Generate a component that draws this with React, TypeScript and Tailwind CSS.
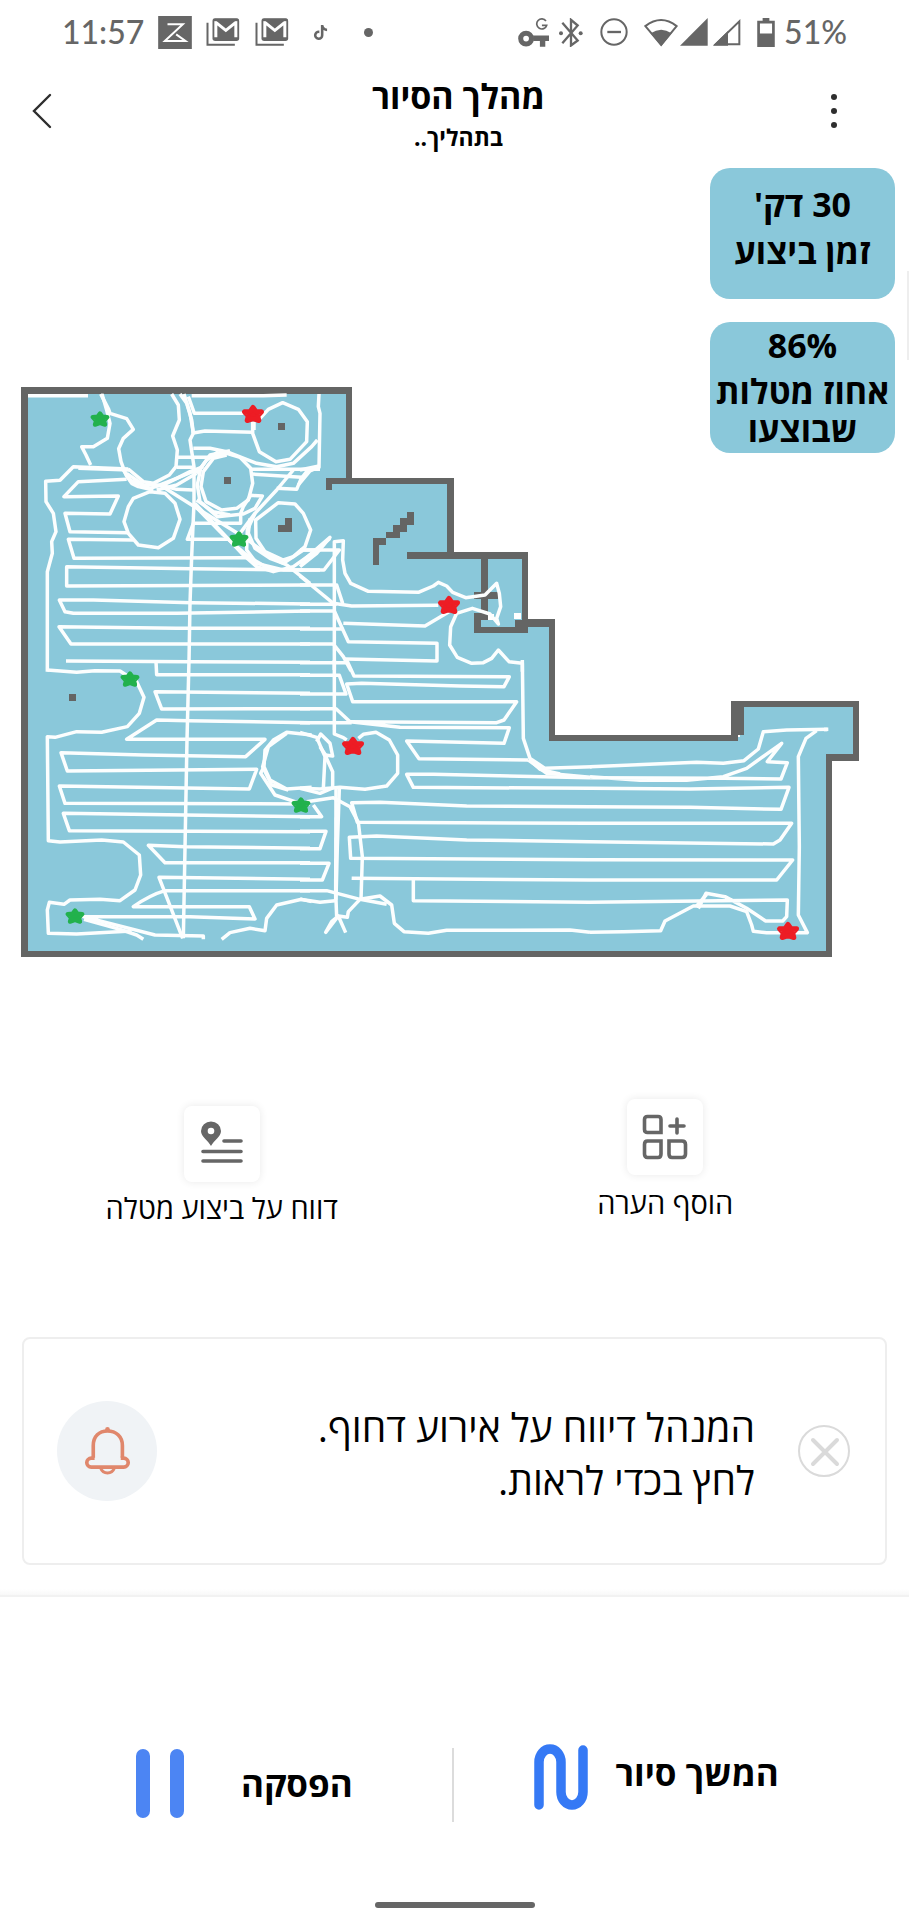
import type { ReactNode } from "react";
import { FaTiktok } from "react-icons/fa6";

function Glyph({ box, className, children }: { box: string; className: string; children: ReactNode }) {
  return (
    <svg viewBox={box} className={className} fill="none" stroke="currentColor" aria-hidden="true">
      {children}
    </svg>
  );
}

function MailGlyph() {
  return (
    <Glyph box="0 0 101 84" className="h-7 w-[34px]">
      <path d="M4 14V80H86" strokeWidth="6" />
      <rect x="19" y="1" width="80" height="68" rx="8" fill="currentColor" stroke="none" />
      <path d="M29 58V13L59 37 89 13V58" stroke="#fff" strokeWidth="9" />
      <path d="M22 6H96" strokeWidth="7" />
    </Glyph>
  );
}

function StatusBar() {
  return (
    <div className="flex h-16 items-center justify-between pr-[62px] pl-[62px] text-[#666]">
      <div className="flex items-center">
        <span className="font-[Lato,sans-serif] text-[32px] leading-10 font-medium">11:57</span>
        <Glyph box="0 0 101 99" className="ml-[14px] h-[33px] w-[34px]">
          <rect width="101" height="99" fill="currentColor" stroke="none" />
          <path d="M28 25H74L20 75H82L54 55" stroke="#fff" strokeWidth="6" />
        </Glyph>
        <div className="ml-[14px] flex gap-[15px]">
          <MailGlyph />
          <MailGlyph />
        </div>
        <FaTiktok className="ml-6 size-[15px]" aria-hidden="true" />
        <span className="ml-9 size-[9px] rounded-full bg-[#666]" />
      </div>
      <div className="flex items-center">
        <Glyph box="200 52 92 86" className="h-[29px] w-[31px]">
          <circle cx="224" cy="113" r="16" strokeWidth="15" />
          <path d="M245 112H292M273 112V137" strokeWidth="16" />
          <path d="M283 61A15 15 0 1 0 285 74H271" strokeWidth="5" />
        </Glyph>
        <Glyph box="324 52 72 86" className="ml-[10px] h-[29px] w-6">
          <path d="M334 66L380 119 360 134V57L380 74 334 127" strokeWidth="7" />
          <circle cx="330" cy="97" r="6" fill="currentColor" stroke="none" />
          <circle cx="389" cy="97" r="6" fill="currentColor" stroke="none" />
        </Glyph>
        <Glyph box="446 55 84 84" className="ml-[17px] size-7">
          <circle cx="488" cy="97" r="38" strokeWidth="6" />
          <path d="M468 97H509" strokeWidth="7" />
        </Glyph>
        <Glyph box="577 52 101 86" className="ml-4 h-[29px] w-[34px]">
          <path d="M581 76Q628 40 674 76L628 132Z" strokeWidth="6" />
          <path d="M597 97Q628 76 659 97L628 135Z" fill="currentColor" stroke="none" />
        </Glyph>
        <Glyph box="687 54 84 84" className="ml-[2px] size-7">
          <path d="M687 137L770 54V137Z" fill="currentColor" stroke="none" />
        </Glyph>
        <Glyph box="787 54 84 84" className="ml-[5px] size-7">
          <path d="M795 133L866 64V133Z" strokeWidth="6" />
          <path d="M787 137L832 93V137Z" fill="currentColor" stroke="none" />
        </Glyph>
        <Glyph box="918 54 52 86" className="ml-4 h-[29px] w-[18px]">
          <path d="M934 54H954V62H970V140H918V62H934ZM926 70V100H962V70Z" fill="currentColor" fillRule="evenodd" stroke="none" />
        </Glyph>
        <span className="ml-[9px] font-[Lato,sans-serif] text-[32px] leading-10 font-medium">51%</span>
      </div>
    </div>
  );
}

function Header() {
  return (
    <header className="grid h-[104px] grid-cols-[1fr_auto_1fr] items-center pr-5 pb-[10px] pl-7">
      <button type="button" aria-label="חזרה" className="flex h-12 w-7 items-center justify-center text-[#2e2e2e]">
        <Glyph box="0 0 20 36" className="h-9 w-5">
          <path d="M18 2L2 18 18 34" strokeWidth="2.4" strokeLinecap="round" />
        </Glyph>
      </button>
      <div dir="rtl" className="flex flex-col items-center pt-[5px] font-bold text-black">
        <h1 className="text-[34px] leading-[46px]">מהלך הסיור</h1>
        <p className="text-[23px] leading-9">בתהליך..</p>
      </div>
      <button
        type="button"
        aria-label="תפריט"
        className="mr-[37px] flex h-12 w-9 flex-col items-center justify-center gap-2 justify-self-end"
      >
        <span className="size-[6px] rounded-full bg-[#2e2e2e]" />
        <span className="size-[6px] rounded-full bg-[#2e2e2e]" />
        <span className="size-[6px] rounded-full bg-[#2e2e2e]" />
      </button>
    </header>
  );
}

// The map is stored in tiles of 300 units, three path units to one map unit.
const tiles = [
  {
    at: "translate(10 370) scale(0.33333)",
    d: [
      "M54 77H234",
      "M272 72L284 95 296 118 300 130 350 146 370 178 340 205 326 236 333 275 348 315 365 340 385 350 430 360",
      "M276 72L290 120 300 160 292 205 250 230 215 230 228 255 242 285",
      "M355 297L190 290 150 331 107 334 108 395 130 430 138 485 125 515 127 550 112 605 112 905",
      "M358 300L205 295",
      "M485 72L505 105 508 150 488 198 502 240 498 290 478 315 430 340 400 335 355 297",
      "M510 72L530 100 545 150 550 190 540 210 552 290 552 400 545 560 540 700 537 875",
      "M522 72L540 130 550 190",
      "M545 77H760L830 75",
      "M535 80L553 130H700",
      "M545 190L585 183 728 187",
      "M728 155V190L748 245 798 275 840 268 890 215 892 155 865 118 818 98 775 118 750 145",
      "M732 155V180",
      "M550 235L600 235 650 245 740 280 800 290 850 280 905 230 922 210",
      "M500 262H600L655 245",
      "M650 255L610 265 580 305 573 350 588 395 635 420 680 415 715 390 728 340 722 295 690 262 650 250",
      "M660 242L600 255 572 295 562 345 570 395 622 440 700 432 735 415 757 378 722 376 700 410 692 430V460H550L532 508H680",
      "M560 390L610 425 660 435",
      "M500 292H555M720 298H930",
      "M560 310L590 270 625 245",
      "M725 312L875 322 860 358 800 355",
      "M930 290L900 303 865 345",
      "M850 300L800 360 735 430 690 490",
      "M450 345L550 408 700 500 780 560 830 585 900 640",
      "M555 400L620 470 700 555 740 590 790 605 850 590 900 555 960 505",
      "M552 405L640 495 715 560 780 598",
      "M340 300L360 330 420 355 470 340 540 305 580 290",
      "M350 310L400 345 450 345 500 325 560 300",
      "M440 360L500 345 560 310",
      "M450 345L500 358 550 360",
      "M420 365L370 385 355 410 342 455 355 490 385 525 445 533 490 505 510 448 495 400 465 370Z",
      "M805 398L855 402 880 430 902 480 885 530 850 560 820 570 765 545 738 505 737 450Z",
      "M720 445L715 490 735 535 780 565 820 580 880 540 930 540",
      "M735 430L712 480 710 540 740 580 820 600H930",
      "M350 328L205 335 162 380 325 378 300 432 165 430 180 485 355 488",
      "M370 510L175 508 192 565 720 563",
      "M880 600L545 596 170 590V648L900 645",
      "M900 702L545 698 250 690 148 690 165 725 190 730 500 730 900 723",
      "M900 775H500L147 770 183 822H900",
      "M168 873L540 875 900 877",
    ],
  },
  {
    at: "translate(300 370) scale(0.33333)",
    d: [
      "M57 72L55 110 60 130 57 290 20 305 0 330",
      "M0 300L57 288",
      "M0 540H118L72 600H0",
      "M0 580L90 502 50 550 0 590",
      "M103 900V515L130 512 128 570 135 610 152 640 205 664 355 667 400 648 415 637 440 648 458 667 497 683 555 675 590 640 598 670 602 710 590 745 595 762 570 732 517 715 470 730 452 770 449 825 472 862 515 880 550 878 575 865 595 840 627 875 667 880V905",
      "M0 645H110L128 700",
      "M0 618L100 700 155 708 415 706",
      "M0 703H110",
      "M0 723H103L145 815 411 820V873L135 867",
      "M0 822H100L130 860 153 903",
      "M0 878H138",
      "M0 777H130",
      "M130 760L375 768 447 725",
    ],
  },
  {
    at: "translate(10 660) scale(0.33333)",
    d: [
      "M537 0L531 240 520 835",
      "M112 30L200 37 255 32 330 33 380 65 402 112 388 160 352 200 275 217 200 215 135 232 112 230 115 542 150 546 275 540 340 546 388 585 392 645 375 690 330 722 270 718 180 720 162 733 118 727 112 750 115 820 200 822 365 813",
      "M438 5L440 44H900",
      "M900 100L435 95 455 147 900 146",
      "M900 188L535 182 440 180 350 238H765L707 290 400 285 153 278 172 333 740 328 718 387 148 378 165 430 900 432",
      "M900 470L525 465 160 460 178 512 900 515",
      "M900 565L525 560 415 556 465 608H900",
      "M900 658L447 652 518 835",
      "M900 692H465Q420 705 370 740H718L735 777 540 770 220 770 435 825 580 828V838",
      "M222 778L330 808 380 825 400 838",
      "M635 838L660 818 720 805 765 812 770 775 800 735 875 718 905 725",
      "M905 225L830 217 790 240 765 270 762 320 780 360 830 387 905 382",
      "M830 220L775 260 758 320 785 375 835 390",
      "M762 320L752 340 795 405 870 430",
    ],
  },
  {
    at: "translate(300 660) scale(0.33333)",
    d: [
      "M140 0L162 48 628 50 612 80 480 78 185 70 140 72 158 125H650L612 180 590 188 150 185 300 202 628 203 612 250 320 243 357 296 685 300",
      "M0 46H118L138 102H0",
      "M0 146H108L150 185",
      "M0 188H155",
      "M103 0V222L130 233 140 240",
      "M175 235L190 223 228 217 268 240 293 285V340L260 378 195 388 120 382 60 387 0 385",
      "M0 217L50 232 75 290 70 385",
      "M50 245L62 222 90 250 98 288 75 285 98 335V382",
      "M60 260L80 290",
      "M0 385L60 400 100 383",
      "M667 0L670 235 690 295 735 325 875 320",
      "M685 300L740 340 870 352",
      "M690 300L720 328 780 342",
      "M870 353L400 343 320 343 340 382 870 385",
      "M870 440L500 438 240 427 155 428 172 487 870 490",
      "M870 545L500 540 230 528 148 532 152 595 870 599",
      "M155 655L870 660",
      "M340 660V722L870 727",
      "M20 425L100 413 150 440 175 487 187 590 183 720",
      "M40 435L65 470H0",
      "M0 514H78L60 566H0",
      "M0 610H87L67 660H0",
      "M0 692H80L180 718 240 708 275 735 283 790 312 815 385 820 440 811 810 810 870 817",
      "M260 733L180 718 145 755 142 772 115 768 95 785 77 817 115 768 137 818",
      "M0 718L60 727 105 722",
      "M118 385L112 560 108 720 110 770",
      "M108 385L107 720",
    ],
  },
  {
    at: "translate(590 660) scale(0.33333)",
    d: [
      "M0 320L320 307 400 310 462 302 505 267 520 215 590 210 715 208",
      "M680 212L648 235 625 290 628 560 625 765 652 818H530L490 814 485 795 470 755 420 738 310 738 225 783 212 812 100 815 0 817",
      "M0 350L150 361 290 361 400 350 470 325 575 250 532 305 592 308 573 357 400 355 0 353",
      "M0 385L300 387 597 382 573 448 300 442 0 440",
      "M0 490H605L570 540 550 552 0 545",
      "M0 599L608 600 560 660H0",
      "M0 727L592 720 590 770 578 783H527L470 745 405 710 348 700 325 745",
      "M350 703L318 740",
      "M707 203V214",
    ],
  },
];

const stars = [
  { x: 100, y: 419, done: true },
  { x: 239, y: 539, done: true },
  { x: 130, y: 679, done: true },
  { x: 301, y: 805, done: true },
  { x: 75, y: 916, done: true },
  { x: 253, y: 414, done: false },
  { x: 449, y: 605, done: false },
  { x: 353, y: 746, done: false },
  { x: 788, y: 931, done: false },
];

function TourMap() {
  return (
    <svg viewBox="0 380 909 585" className="w-full" role="img" aria-label="מפת הסיור">
      <path
        fill="#8ac8da"
        d="M22 388H351V479H453V553H528V620H554V737H740V702H858V760H831V956H22Z"
      />
      <g fill="#646564">
        <path d="M21 387H352V478H454V552H528V619H555V735H731V701H859V761H832V957H21ZM28 394V951H826V754H853V707H744V735H738V741H549V627H528V633H474V613H488V620H481V627H515V620H522V559H488V592H498V599H488V613H481V599H474V592H481V559H407V552H447V484H332V490H326V478H346V394Z" fillRule="evenodd" />
        <rect x="69" y="694" width="7" height="7" />
        <rect x="224" y="477" width="7" height="7" />
        <rect x="278" y="423" width="7" height="7" />
        <path d="M285 518H292V532H278V525H285ZM373 538H386V532H393V525H400V518H407V512H414V525H407V532H400V538H386V545H379V565H373Z" />
      </g>
      <path d="M514 613H521V619H514ZM488 614H494V620H488Z" fill="#fff" />
      {tiles.map((tile) => (
        <g key={tile.at} transform={tile.at} fill="none" stroke="#fcfefe" strokeWidth="10.5" strokeLinejoin="round">
          {tile.d.map((d) => (
            <path key={d} d={d} />
          ))}
        </g>
      ))}
      {stars.map((star) => (
        <path
          key={`${star.x}-${star.y}`}
          transform={`translate(${star.x} ${star.y}) scale(${star.done ? 0.86 : 1})`}
          d="M0 -6.500L2.8 -2.6 8.5 -2.2 4.6 2 5.8 6.500 0 4.6 -5.8 6.500 -4.6 2 -8.5 -2.2 -2.8 -2.6Z"
          fill={star.done ? "#22b14c" : "#ed1c24"}
          stroke={star.done ? "#22b14c" : "#ed1c24"}
          strokeWidth="5"
          strokeLinejoin="round"
        />
      ))}
    </svg>
  );
}

function Actions() {
  return (
    <section className="grid grid-cols-2 items-start pt-[134px] pr-[22px]">
      <button type="button" className="flex flex-col items-center gap-[6px] justify-self-center pt-[7px] text-[#666]">
        <span className="rounded-lg bg-white shadow-[0_0_9px_rgba(0,0,0,0.09)]">
          <Glyph box="0 0 76 76" className="size-[76px]">
            <path d="M27 40C24 34 17 31 17 25a10 9.500 0 0 1 20 0C37 31 30 34 27 40Z" fill="currentColor" stroke="none" />
            <circle cx="27" cy="25" r="3.300" fill="#fff" stroke="none" />
            <path d="M40 35H57M19 45.500H57M19 55H57" strokeWidth="3.600" strokeLinecap="round" />
          </Glyph>
        </span>
        <span dir="rtl" className="text-[29px] leading-10 text-black">דווח על ביצוע מטלה</span>
      </button>
      <button type="button" className="flex flex-col items-center gap-2 justify-self-center text-[#666]">
        <span className="rounded-lg bg-white shadow-[0_0_9px_rgba(0,0,0,0.09)]">
          <Glyph box="0 0 76 76" className="size-[76px]">
            <path
              d="M20.500 17.500H31Q34 17.500 34 20.500V33.500H20.500Q17.500 33.500 17.500 30.500V20.500Q17.500 17.500 20.500 17.500ZM20.500 42H34V55Q34 58.500 31 58.500H20.500Q17.500 58.500 17.500 55V45.500Q17.500 42 20.500 42ZM42 42H55Q58.500 42 58.500 45.500V55Q58.500 58.500 55 58.500H45Q42 58.500 42 55Z"
              strokeWidth="3.600"
            />
            <path d="M50 20V34M43 27H57" strokeWidth="3.600" strokeLinecap="round" />
          </Glyph>
        </span>
        <span dir="rtl" className="text-[29px] leading-10 text-black">הוסף הערה</span>
      </button>
    </section>
  );
}

function Alert() {
  return (
    <section className="mx-[22px] mt-[109px] flex h-[228px] items-center justify-between rounded-lg border-2 border-[#eee] pr-[35px] pl-[33px]">
      <span className="flex size-[100px] shrink-0 items-center justify-center rounded-full bg-[#f0f3f6] text-[#e0876c]">
        <Glyph box="0 0 134 145" className="h-12 w-[45px]">
          <path d="M24 93V56C24 28 42 12 67 12S112 28 112 56V93" strokeWidth="11" />
          <path d="M28 94H18A13 13 0 0 0 18 121H116A13 13 0 0 0 116 94H107" strokeWidth="11" />
          <path d="M46 124C54 144 80 144 88 124" strokeWidth="9" />
          <circle cx="67" cy="7" r="7" fill="currentColor" stroke="none" />
        </Glyph>
      </span>
      <div dir="rtl" className="flex flex-1 items-center gap-[43px]">
        <button type="button" aria-label="סגירה" className="text-[#dadada]">
          <Glyph box="0 0 52 52" className="size-[52px]">
            <circle cx="26" cy="26" r="25" strokeWidth="2" />
            <path d="M15 15L39 39M39 15L15 39" strokeWidth="4" strokeLinecap="round" />
          </Glyph>
        </button>
        <p className="pt-1 text-[39px] leading-[53px] text-black">
          המנהל דיווח על אירוע דחוף.
          <br />
          לחץ בכדי לראות.
        </p>
      </div>
    </section>
  );
}

function BottomBar() {
  return (
    <footer className="mt-6">
      <div className="h-2 border-b-2 border-[#f2f2f2] bg-linear-to-b from-white to-[#f8f8f8]" />
      <div className="grid grid-cols-[1fr_2px_1fr] items-start pt-[147px] pr-1">
        <button type="button" className="flex items-center gap-[57px] pt-[5px] pl-[136px] text-[#4c85f3]">
          <Glyph box="0 0 48 69" className="h-[69px] w-12">
            <path d="M7 7V62M41 7V62" strokeWidth="14" strokeLinecap="round" />
          </Glyph>
          <span dir="rtl" className="text-[35px] leading-[46px] font-bold text-black">הפסקה</span>
        </button>
        <span className="mt-1 h-[74px] w-[2px] bg-[#dcdcdc]" />
        <button type="button" className="flex items-center gap-7 pl-20 text-[#3579f5]">
          <Glyph box="0 0 54 66" className="h-[66px] w-[54px]">
            <path d="M5 61V18A11 13 0 0 1 27 18V48A11 13 0 0 0 49 48V6" strokeWidth="9.500" strokeLinecap="round" />
          </Glyph>
          <span dir="rtl" className="pb-2 text-[35px] leading-[46px] font-bold text-black">המשך סיור</span>
        </button>
      </div>
      <div className="flex justify-center pt-20 pb-3">
        <span className="h-[6px] w-40 rounded-full bg-[#666]" />
      </div>
    </footer>
  );
}

export default function App() {
  return (
    <div className="min-h-screen overflow-x-hidden bg-white font-['Open_Sans',sans-serif]">
      <StatusBar />
      <Header />
      <main>
        <section className="relative grid">
          <div className="col-start-1 row-start-1 pt-[212px]">
            <TourMap />
          </div>
          <div
            dir="rtl"
            className="z-10 col-start-1 row-start-1 mr-[14px] flex flex-col gap-[23px] self-start justify-self-end text-center text-[34px] font-bold text-black"
          >
            <div className="h-[131px] w-[185px] rounded-[20px] bg-[#8ac8da] pt-[13px] leading-[47px]">
              <p>30 דק'</p>
              <p>זמן ביצוע</p>
            </div>
            <div className="h-[131px] w-[185px] rounded-[20px] bg-[#8ac8da] leading-[46px]">
              <p dir="ltr">86%</p>
              <p className="pt-1 leading-[38px] whitespace-nowrap">
                אחוז מטלות
                <br />
                שבוצעו
              </p>
            </div>
          </div>
          <span className="absolute top-[103px] right-0 h-[89px] w-[2px] bg-[#eee]" />
        </section>
        <Actions />
        <Alert />
      </main>
      <BottomBar />
    </div>
  );
}
